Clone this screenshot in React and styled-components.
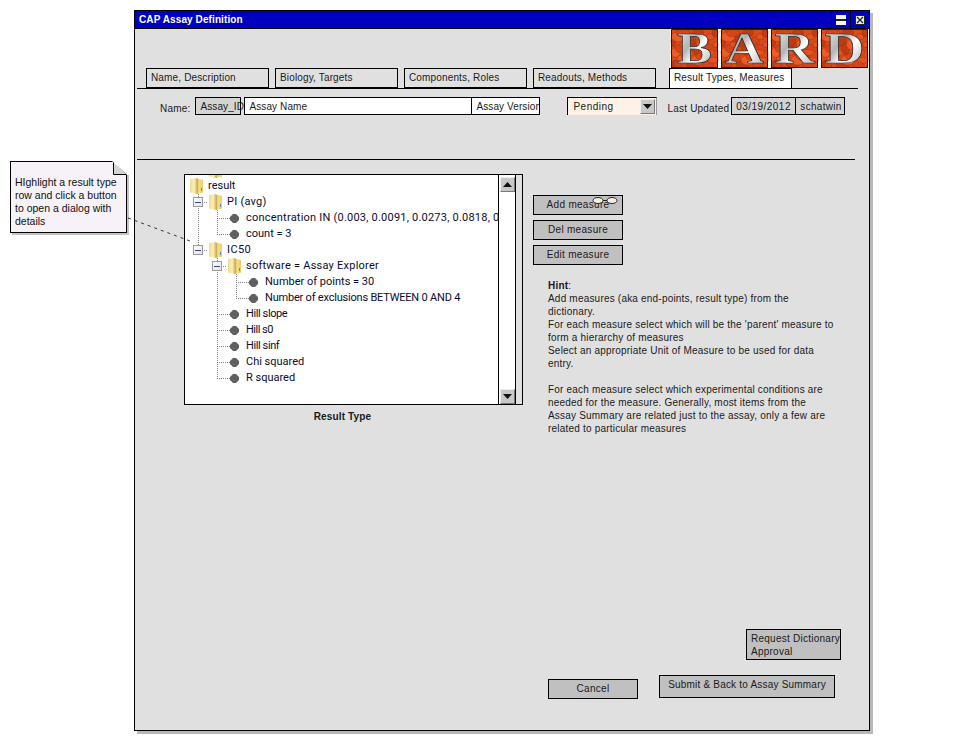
import React from 'react'
import styled, { createGlobalStyle } from 'styled-components'

const sans = '"Liberation Sans", Arial, sans-serif'
const treeFont = 'Roboto, Tahoma, sans-serif'

const GlobalStyle = createGlobalStyle`
  html, body {
    margin: 0;
    padding: 0;
    background: #fff;
    font-family: ${sans};
    font-size: 11px;
    color: #1a1a1a;
  }
  * { box-sizing: border-box; }
`

const Page = styled.div`
  position: relative;
  display: flex;
  align-items: flex-start;
  width: 962px;
  height: 741px;
  padding: 10px 0 0 10px;
  overflow: hidden;
`

const Note = styled.div`
  position: relative;
  width: 117px;
  height: 72px;
  margin: 151px 7px 0 0;
  padding: 14px 2px 0 4px;
  background: #f6f2f7;
  border: 1px solid #000;
  box-shadow: 2px 2px 0 #c4c4c4;
  font-size: 10.5px;
  line-height: 13px;
  color: #111;
  clip-path: polygon(0 0, 102px 0, 117px 14px, 121px 14px, 121px 76px, 0 76px);
`

const NoteFold = styled.svg`
  position: absolute;
  top: -1px;
  right: -1px;
  width: 14px;
  height: 14px;
`

const Connector = styled.svg`
  position: absolute;
  left: 126px;
  top: 216px;
  width: 66px;
  height: 28px;
  pointer-events: none;
`

const Window = styled.div`
  display: flex;
  flex-direction: column;
  width: 736px;
  height: 721px;
  background: #e0e0e0;
  border: 1px solid #000;
  box-shadow: 3px 3px 0 #b8b8b8;
`

const TitleBar = styled.div`
  display: flex;
  align-items: stretch;
  height: 18px;
  background: #0000c0;
  border-bottom: 1px solid #000;
`

const TitleText = styled.div`
  flex: 1;
  padding-left: 4px;
  line-height: 17px;
  font-size: 10px;
  font-weight: bold;
  letter-spacing: 0.1px;
  color: #fff;
`

const TitleButton = styled.div`
  display: flex;
  align-items: center;
  justify-content: center;
  width: 19px;
  border-left: 1px solid #000;
`

const LogoStrip = styled.div`
  display: flex;
  gap: 3px;
  align-self: flex-end;
  height: 39px;
  padding: 0 1px 0 1px;
  background: #fff;
`

const LogoSvg = styled.svg`
  width: 47px;
  height: 39px;
  overflow: visible;
`

const TabRow = styled.div`
  display: flex;
  gap: 6px;
  height: 20px;
  margin: 0 11px 0 11px;
`

const Tab = styled.div`
  width: 123px;
  margin-left: ${p => (p.$active ? '7px' : '0')};
  padding-left: 4px;
  line-height: 18px;
  font-size: 10px;
  letter-spacing: 0.15px;
  background: ${p => (p.$active ? '#fff' : '#e0e0e0')};
  border: 1px solid #000;
  border-bottom: ${p => (p.$active ? 'none' : '1px solid #000')};
`

const Rule = styled.div`
  height: 1px;
  margin: ${p => p.$margin};
  background: #000;
`

const NameRow = styled.div`
  display: flex;
  align-items: flex-start;
  height: 62px;
  margin: 8px 0 0 25px;
`

const Label = styled.span`
  margin: ${p => p.$margin || '0'};
  line-height: 18px;
  padding-top: 3px;
  font-size: 10px;
  letter-spacing: 0.2px;
  white-space: nowrap;
`

const Field = styled.div`
  flex: none;
  width: ${p => p.$width}px;
  height: 18px;
  margin-left: ${p => p.$gap || 0}px;
  padding-left: 4px;
  line-height: 17px;
  font-size: 10px;
  letter-spacing: ${p => p.$spacing || 0.1}px;
  white-space: nowrap;
  overflow: ${p => (p.$overflow ? 'visible' : 'hidden')};
  background: ${p => p.$bg || '#fff'};
  border: 1px solid #000;
`

const SelectBox = styled.div`
  display: flex;
  align-items: center;
  justify-content: space-between;
  width: 90px;
  height: 18px;
  margin-left: 27px;
  padding-left: 5px;
  font-size: 10px;
  letter-spacing: 0.5px;
  background: #fdf2e5;
  border: 1px solid #000;
  border-bottom: none;
  border-right-color: #999;
`

const SelectArrow = styled.div`
  display: flex;
  align-items: center;
  justify-content: center;
  width: 15px;
  height: 15px;
  margin-right: 1px;
  background: #c8c8c8;
  border: 1px solid;
  border-color: #eee #777 #777 #eee;
`

const Main = styled.div`
  display: flex;
  align-items: flex-start;
  margin: 14px 0 0 49px;
`

const TreeColumn = styled.div`
  display: flex;
  flex-direction: column;
  align-items: stretch;
  width: 339px;
`

const TreeFrame = styled.div`
  display: flex;
  height: 231px;
  background: #e0e0e0;
  border: 1px solid #000;
`

const TreeBody = styled.div`
  flex: 1;
  min-width: 0;
  padding: 2px 0 0 4px;
  overflow: hidden;
  background: #fff;
  border-right: 1px solid #000;
`

const ScrollColumn = styled.div`
  display: flex;
  flex-direction: column;
  justify-content: space-between;
  width: 17px;
  padding: 2px 0 0 1px;
  background: #fff;
  border-right: 1px solid #000;
  margin-right: 6px;
`

const ScrollButton = styled.div`
  display: flex;
  align-items: center;
  justify-content: center;
  width: 15px;
  height: 15px;
  background: #c8c8c8;
  border: 1px solid;
  border-color: #eee #777 #777 #eee;
`

const TreeRow = styled.div`
  display: flex;
  align-items: stretch;
  height: 16px;
  margin-top: ${p => (p.$clipped ? '-15px' : '0')};
  font-family: ${treeFont};
  font-size: 11px;
  line-height: 15px;
  color: #0c0c30;
  white-space: nowrap;
`

const TreeLabel = styled.span`
  letter-spacing: ${p => p.$track || 0}px;
`

const dotsV = 'repeating-linear-gradient(to bottom, #808080 0 1px, transparent 1px 2px)'
const dotsH = 'repeating-linear-gradient(to right, #808080 0 1px, transparent 1px 2px)'

const guideImages = {
  none: 'none',
  pipe: `${dotsV} 9px 0 / 1px 16px no-repeat`,
  tee: `${dotsV} 9px 0 / 1px 16px no-repeat, ${dotsH} 9px 8px / 10px 1px no-repeat`,
  elbow: `${dotsV} 9px 0 / 1px 9px no-repeat, ${dotsH} 9px 8px / 10px 1px no-repeat`,
}

const Guide = styled.div`
  display: flex;
  align-items: center;
  flex: none;
  width: 19px;
  padding-left: 4px;
  background: ${p => guideImages[p.$kind]};
`

const Expander = styled.div`
  display: flex;
  align-items: center;
  justify-content: center;
  width: 10px;
  height: 10px;
  background: linear-gradient(135deg, #fff, #e2e2ea);
  border: 1px solid #9a9a9a;
  &::after {
    content: '';
    width: 6px;
    height: 1px;
    background: #3a4a70;
  }
`

const IconCell = styled.div`
  display: flex;
  align-items: center;
  flex: none;
  width: 19px;
  padding-left: 1px;
`

const LeafCell = styled.div`
  display: flex;
  align-items: center;
  flex: none;
  width: 19px;
  padding-left: 3px;
  background: ${dotsH} 0 8px / 4px 1px no-repeat;
`

const LeafDot = styled.svg`
  width: 9px;
  height: 9px;
`

const SideColumn = styled.div`
  display: flex;
  flex-direction: column;
  margin: 21px 0 0 10px;
  width: 300px;
`

const ActionStack = styled.div`
  display: flex;
  flex-direction: column;
  gap: 5px;
`

const Button = styled.div`
  width: ${p => p.$width}px;
  height: ${p => p.$height}px;
  line-height: ${p => p.$height - 2}px;
  text-align: center;
  font-size: 10px;
  letter-spacing: 0.3px;
  background: #c0c0c0;
  border: 1px solid #000;
  white-space: nowrap;
`

const GlassesSlot = styled.div`
  position: relative;
`

const Glasses = styled.svg`
  position: absolute;
  left: 59px;
  top: 1px;
  width: 27px;
  height: 9px;
`

const Hint = styled.div`
  margin: 14px 0 0 15px;
  width: 290px;
  font-size: 10px;
  line-height: 13px;
  letter-spacing: 0.2px;
`

const HintHead = styled.b`
  font-weight: bold;
`

const HintLine = styled.div`
  min-height: 13px;
  white-space: nowrap;
`

const Caption = styled.div`
  margin-top: 5px;
  padding-right: 22px;
  text-align: center;
  font-size: 10px;
  font-weight: bold;
  line-height: 14px;
  letter-spacing: 0.15px;
`

const Footer = styled.div`
  display: flex;
  flex: 1;
  flex-direction: column;
  justify-content: flex-end;
  align-items: flex-end;
  padding: 0 34px 31px 0;
`

const RequestButton = styled.div`
  width: 95px;
  height: 31px;
  margin: 0 -6px 15px 0;
  padding: 2px 0 0 4px;
  line-height: 13px;
  font-size: 10px;
  letter-spacing: 0.25px;
  background: #c0c0c0;
  border: 1px solid #000;
  white-space: nowrap;
`

const FooterRow = styled.div`
  display: flex;
  align-items: flex-end;
  gap: 21px;
`

const SubmitButton = styled(Button)`
  margin-bottom: 1px;
  line-height: 18px;
  letter-spacing: 0.2px;
`

const blobs = [...Array(34)].map((_, i) => ({
  x: (i * 17.3) % 47,
  y: (i * 11.7) % 39,
  rx: 4 + (i % 3) * 1.5,
  ry: 3 + (i % 4),
  fill: ['#e8541e', '#d2451a', '#f2602a', '#bb3a14'][i % 4],
}))

function LogoTile({ letter, id, width }) {
  return (
    <LogoSvg viewBox="0 0 47 39">
      <defs>
        <linearGradient id={id} x1="0" y1="0" x2="1" y2="1">
          <stop offset="0" stopColor="#f6f6f6" />
          <stop offset="0.4" stopColor="#b4b4b4" />
          <stop offset="0.58" stopColor="#ffffff" />
          <stop offset="1" stopColor="#a4a4a4" />
        </linearGradient>
      </defs>
      <rect width="47" height="39" fill="#d84c1c" />
      {blobs.map((b, i) => (
        <ellipse key={i} cx={b.x} cy={b.y} rx={Math.min(b.rx, b.x, 47 - b.x)} ry={Math.min(b.ry, b.y, 39 - b.y)} fill={b.fill} stroke="#9a2c0e" strokeWidth="0.5" opacity="0.85" />
      ))}
      <rect x="0.5" y="0.5" width="46" height="38" fill="none" stroke="#2a1a14" />
      <text
        x="23.5"
        y="33.5"
        textAnchor="middle"
        fontFamily="'Liberation Serif', serif"
        fontWeight="bold"
        fontSize="45"
        textLength={width}
        lengthAdjust="spacingAndGlyphs"
        fill={`url(#${id})`}
        stroke="#2c2c2c"
        strokeWidth="0.7"
      >
        {letter}
      </text>
    </LogoSvg>
  )
}

function Folder() {
  return (
    <svg width="13" height="16" viewBox="0 0 13 16">
      <defs>
        <linearGradient id="folderLeft" x1="0" y1="0" x2="1" y2="0">
          <stop offset="0" stopColor="#f0d98e" />
          <stop offset="0.6" stopColor="#fbf0bf" />
          <stop offset="1" stopColor="#d8b456" />
        </linearGradient>
        <linearGradient id="folderRight" x1="0" y1="0" x2="1" y2="0">
          <stop offset="0" stopColor="#c39a38" />
          <stop offset="0.3" stopColor="#f6df86" />
          <stop offset="1" stopColor="#eccb62" />
        </linearGradient>
      </defs>
      <path d="M0 1 L7 0 L7 16 L0 14.5 Z" fill="url(#folderLeft)" />
      <path d="M7 0.5 L13 2 L13 14.5 L7 16 Z" fill="url(#folderRight)" />
      <rect x="11" y="10" width="1" height="3" fill="#5c8cc8" />
    </svg>
  )
}

function Dot() {
  return (
    <LeafDot viewBox="0 0 9 9">
      <path d="M3 0 H6 L9 3 V6 L6 9 H3 L0 6 V3 Z" fill="#606060" />
    </LeafDot>
  )
}

// track: per row letter spacing, Roboto digits and capitals differ from the original's font
const tree = [
  { guides: [], folder: true, text: 'result' },
  { guides: ['tee'], expand: true, folder: true, text: 'PI (avg)', track: 0.25 },
  { guides: ['pipe', 'tee'], text: 'concentration IN (0.003, 0.0091, 0.0273, 0.0818, 0.2455, 0.7364)', track: 0.22 },
  { guides: ['pipe', 'elbow'], text: 'count = 3' },
  { guides: ['elbow'], expand: true, folder: true, text: 'IC50', track: 0.4 },
  { guides: ['none', 'tee'], expand: true, folder: true, text: 'software = Assay Explorer', track: 0.24 },
  { guides: ['none', 'pipe', 'tee'], text: 'Number of points = 30' },
  { guides: ['none', 'pipe', 'elbow'], text: 'Number of exclusions BETWEEN 0 AND 4', track: -0.2 },
  { guides: ['none', 'tee'], text: 'Hill slope', track: -0.4 },
  { guides: ['none', 'tee'], text: 'Hill s0', track: -0.5 },
  { guides: ['none', 'tee'], text: 'Hill sinf', track: -0.4 },
  { guides: ['none', 'tee'], text: 'Chi squared' },
  { guides: ['none', 'elbow'], text: 'R squared' },
]

const hintLines = [
  'Add measures (aka end-points, result type) from the',
  'dictionary.',
  "For each measure select which will be the 'parent' measure to",
  'form a hierarchy of measures',
  'Select an appropriate Unit of Measure to be used for data',
  'entry.',
  '',
  'For each measure select which experimental conditions are',
  'needed for the measure. Generally, most items from the',
  'Assay Summary are related just to the assay, only a few are',
  'related to particular measures',
]

const logoLetters = [
  { letter: 'B', width: 35 },
  { letter: 'A', width: 39 },
  { letter: 'R', width: 40 },
  { letter: 'D', width: 40 },
]

export default function App() {
  return (
    <Page>
      <GlobalStyle />
      <Note>
        <NoteFold viewBox="0 0 14 14">
          <path d="M0.5 0.5 L13.5 13.5 H0.5 Z" fill="#d4d4d4" stroke="#000" />
        </NoteFold>
        HIghlight a result type row and click a button to open a dialog with details
      </Note>

      <Window>
        <TitleBar>
          <TitleText>CAP Assay Definition</TitleText>
          <TitleButton>
            <svg width="10" height="10" viewBox="0 0 10 10">
              <rect width="10" height="10" fill="#fbf7e8" />
              <rect y="4" width="10" height="2" fill="#222" />
            </svg>
          </TitleButton>
          <TitleButton>
            <svg width="10" height="10" viewBox="0 0 10 10">
              <rect x="0.5" y="0.5" width="9" height="9" fill="#eee" stroke="#222" />
              <path d="M2 2 L8 8 M8 2 L2 8" stroke="#222" strokeWidth="1.2" />
            </svg>
          </TitleButton>
        </TitleBar>

        <LogoStrip>
          {logoLetters.map(l => (
            <LogoTile key={l.letter} letter={l.letter} width={l.width} id={`silver${l.letter}`} />
          ))}
        </LogoStrip>

        <TabRow>
          <Tab>Name, Description</Tab>
          <Tab>Biology, Targets</Tab>
          <Tab>Components, Roles</Tab>
          <Tab>Readouts, Methods</Tab>
          <Tab $active>Result Types, Measures</Tab>
        </TabRow>
        <Rule $margin="0 11px 0 2px" />

        <NameRow>
          <Label $margin="0 5px 0 0">Name:</Label>
          <Field $width={46} $bg="#d4d4d4" $overflow>Assay_ID</Field>
          <Field $width={228} $gap={3}>Assay Name</Field>
          <Field $width={69} $gap={-1}>Assay Version</Field>
          <SelectBox>
            Pending
            <SelectArrow>
              <svg width="9" height="5" viewBox="0 0 9 5"><path d="M0 0 H9 L4.5 5 Z" fill="#111" /></svg>
            </SelectArrow>
          </SelectBox>
          <Label $margin="0 2px 0 10px">Last Updated</Label>
          <Field $width={65} $bg="#d4d4d4" $spacing={0.45}>03/19/2012</Field>
          <Field $width={50} $gap={-1} $bg="#d4d4d4" $spacing={0.3}>schatwin</Field>
        </NameRow>
        <Rule $margin="0 14px 0 2px" />

        <Main>
          <TreeColumn>
            <TreeFrame>
              <TreeBody>
                <TreeRow $clipped>
                  <Guide $kind="none" />
                  <IconCell><Folder /></IconCell>
                </TreeRow>
                {tree.map(row => {
                  const last = row.guides.length - 1
                  return (
                    <TreeRow key={row.text}>
                      {row.guides.map((kind, i) => (
                        <Guide key={i} $kind={kind}>
                          {row.expand && i === last && <Expander />}
                        </Guide>
                      ))}
                      {row.folder ? <IconCell><Folder /></IconCell> : <LeafCell><Dot /></LeafCell>}
                      <TreeLabel $track={row.track}>{row.text}</TreeLabel>
                    </TreeRow>
                  )
                })}
              </TreeBody>
              <ScrollColumn>
                <ScrollButton>
                  <svg width="9" height="5" viewBox="0 0 9 5"><path d="M0 5 H9 L4.5 0 Z" fill="#111" /></svg>
                </ScrollButton>
                <ScrollButton>
                  <svg width="9" height="5" viewBox="0 0 9 5"><path d="M0 0 H9 L4.5 5 Z" fill="#111" /></svg>
                </ScrollButton>
              </ScrollColumn>
            </TreeFrame>
            <Caption>Result Type</Caption>
          </TreeColumn>

          <SideColumn>
            <ActionStack>
              <GlassesSlot>
                <Button $width={90} $height={20}>Add measure</Button>
                <Glasses viewBox="0 0 27 9">
                  <ellipse cx="6" cy="4.5" rx="5" ry="3" fill="#f6f0e2" stroke="#222" />
                  <ellipse cx="20" cy="4.5" rx="5" ry="3" fill="#f6f0e2" stroke="#222" />
                  <path d="M11 4.5 H15" stroke="#222" />
                </Glasses>
              </GlassesSlot>
              <Button $width={90} $height={20}>Del measure</Button>
              <Button $width={90} $height={20}>Edit measure</Button>
            </ActionStack>
            <Hint>
              <HintLine><HintHead>Hint</HintHead>:</HintLine>
              {hintLines.map((line, i) => <HintLine key={i}>{line}</HintLine>)}
            </Hint>
          </SideColumn>
        </Main>

        <Footer>
          <RequestButton>Request Dictionary<br />Approval</RequestButton>
          <FooterRow>
            <Button $width={90} $height={20}>Cancel</Button>
            <SubmitButton $width={176} $height={23}>Submit &amp; Back to Assay Summary</SubmitButton>
          </FooterRow>
        </Footer>
      </Window>

      <Connector viewBox="0 0 66 28">
        <path d="M2 2 L64 25" stroke="#333" strokeDasharray="3 4" fill="none" />
      </Connector>
    </Page>
  )
}
